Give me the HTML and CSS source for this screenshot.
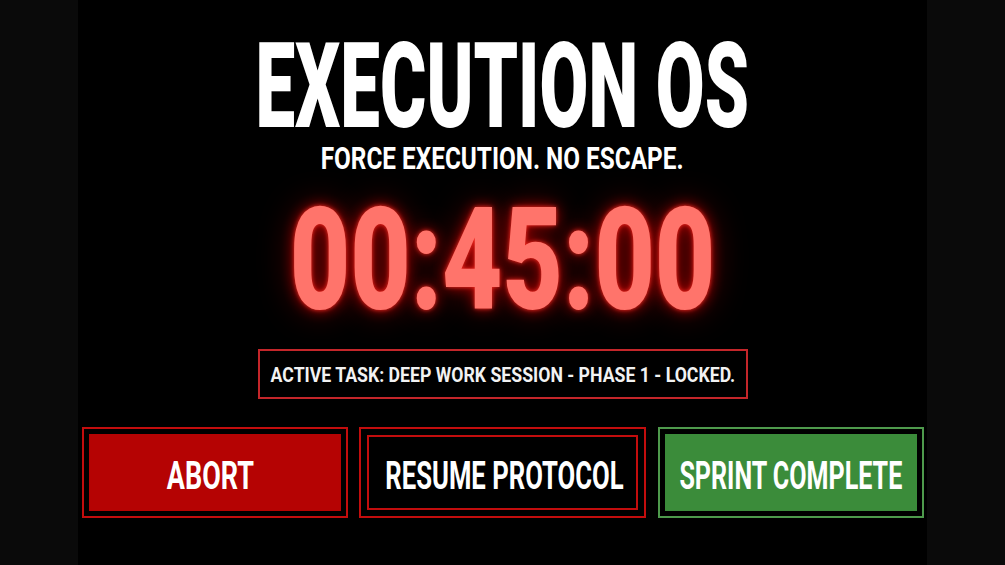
FILE: index.html
```html
<!DOCTYPE html>
<html lang="en">
<head>
<meta charset="utf-8">
<title>Execution OS</title>
<link rel="stylesheet" href="styles.css">
</head>
<body>
<main class="column">
  <h1 class="title"><span class="squeeze sq-title">EXECUTION OS</span></h1>
  <p class="subtitle"><span class="squeeze sq-sub">FORCE EXECUTION. NO ESCAPE.</span></p>
  <div class="timer"><span class="squeeze sq-timer">00:45:00</span></div>
  <div class="task"><span class="squeeze sq-task">ACTIVE TASK: DEEP WORK SESSION - PHASE 1 - LOCKED.</span></div>
  <div class="actions">
    <button class="btn btn-abort"><span class="btn-inner"><span class="squeeze sq-abort">ABORT</span></span></button>
    <button class="btn btn-resume"><span class="btn-inner"><span class="squeeze sq-resume">RESUME PROTOCOL</span></span></button>
    <button class="btn btn-done"><span class="btn-inner"><span class="squeeze sq-done">SPRINT COMPLETE</span></span></button>
  </div>
</main>
</body>
</html>
```
FILE: styles.css
```css
* { box-sizing: border-box; }
html, body { margin: 0; padding: 0; height: 100%; }
body {
  background: #0a0a0a;
  font-family: Roboto, "Liberation Sans", sans-serif;
  font-weight: 700;
  color: #fff;
  overflow: hidden;
}
.column {
  width: 849px;
  height: 565px;
  margin: 0 0 0 78px;
  background: #000;
  display: flex;
  flex-direction: column;
  align-items: center;
  padding-top: 31px;
  white-space: nowrap;
}
.squeeze { display: inline-block; white-space: nowrap; transform-origin: center; }
.title {
  margin: 0;
  font-size: 118px;
  line-height: 0.95;
  font-weight: 900;
  color: #fff;
}
.sq-title { transform: scaleX(0.6); }
.subtitle {
  margin: 0;
  font-size: 31px;
  line-height: 1;
  color: #fff;
}
.sq-sub { transform: scaleX(0.785); }
.timer {
  margin-top: 16px;
  font-size: 142px;
  line-height: 1;
  font-weight: 900;
  color: #ff746b;
  text-shadow: 0 0 5px rgba(255, 50, 40, 0.9), 0 0 16px rgba(255, 0, 0, 0.65), 0 0 40px rgba(200, 0, 0, 0.45);
}
.sq-timer { transform: scaleX(0.735); }
.task {
  margin-top: 17px;
  width: 490px;
  height: 50px;
  padding-top: 2px;
  border: 2px solid #c4262a;
  display: flex;
  align-items: center;
  justify-content: center;
  font-size: 21px;
  line-height: 1;
  color: #f2f2f2;
}
.sq-task { transform: scaleX(0.842); }
.actions {
  margin-top: 28px;
  display: grid;
  grid-template-columns: 266px 287px 266px;
  column-gap: 11.5px;
  justify-content: center;
  width: 849px;
}
.btn {
  min-width: 0;
  height: 91px;
  padding: 5px;
  border: 2px solid #c30d0d;
  background: #000;
  font: inherit;
  color: #fff;
  cursor: pointer;
  display: flex;
}
.btn-inner {
  flex: 1;
  min-width: 0;
  display: flex;
  align-items: center;
  justify-content: center;
  padding-top: 6px;
  border: 2px solid #c30d0d;
  font-size: 38px;
  line-height: 1;
}
.sq-abort { transform: scaleX(0.71); margin-right: 9px; }
.sq-resume { transform: scaleX(0.675); margin-left: 4px; }
.sq-done { transform: scaleX(0.66); }
.btn-abort .btn-inner { background: #b50303; border-color: #b50303; }
.btn-resume { padding: 6px; }
.btn-resume .btn-inner { background: #000; border-color: #c30d0d; }
.btn-done { border-color: #4e9a4c; }
.btn-done .btn-inner { background: #3b8c3a; border-color: #3b8c3a; }
```
